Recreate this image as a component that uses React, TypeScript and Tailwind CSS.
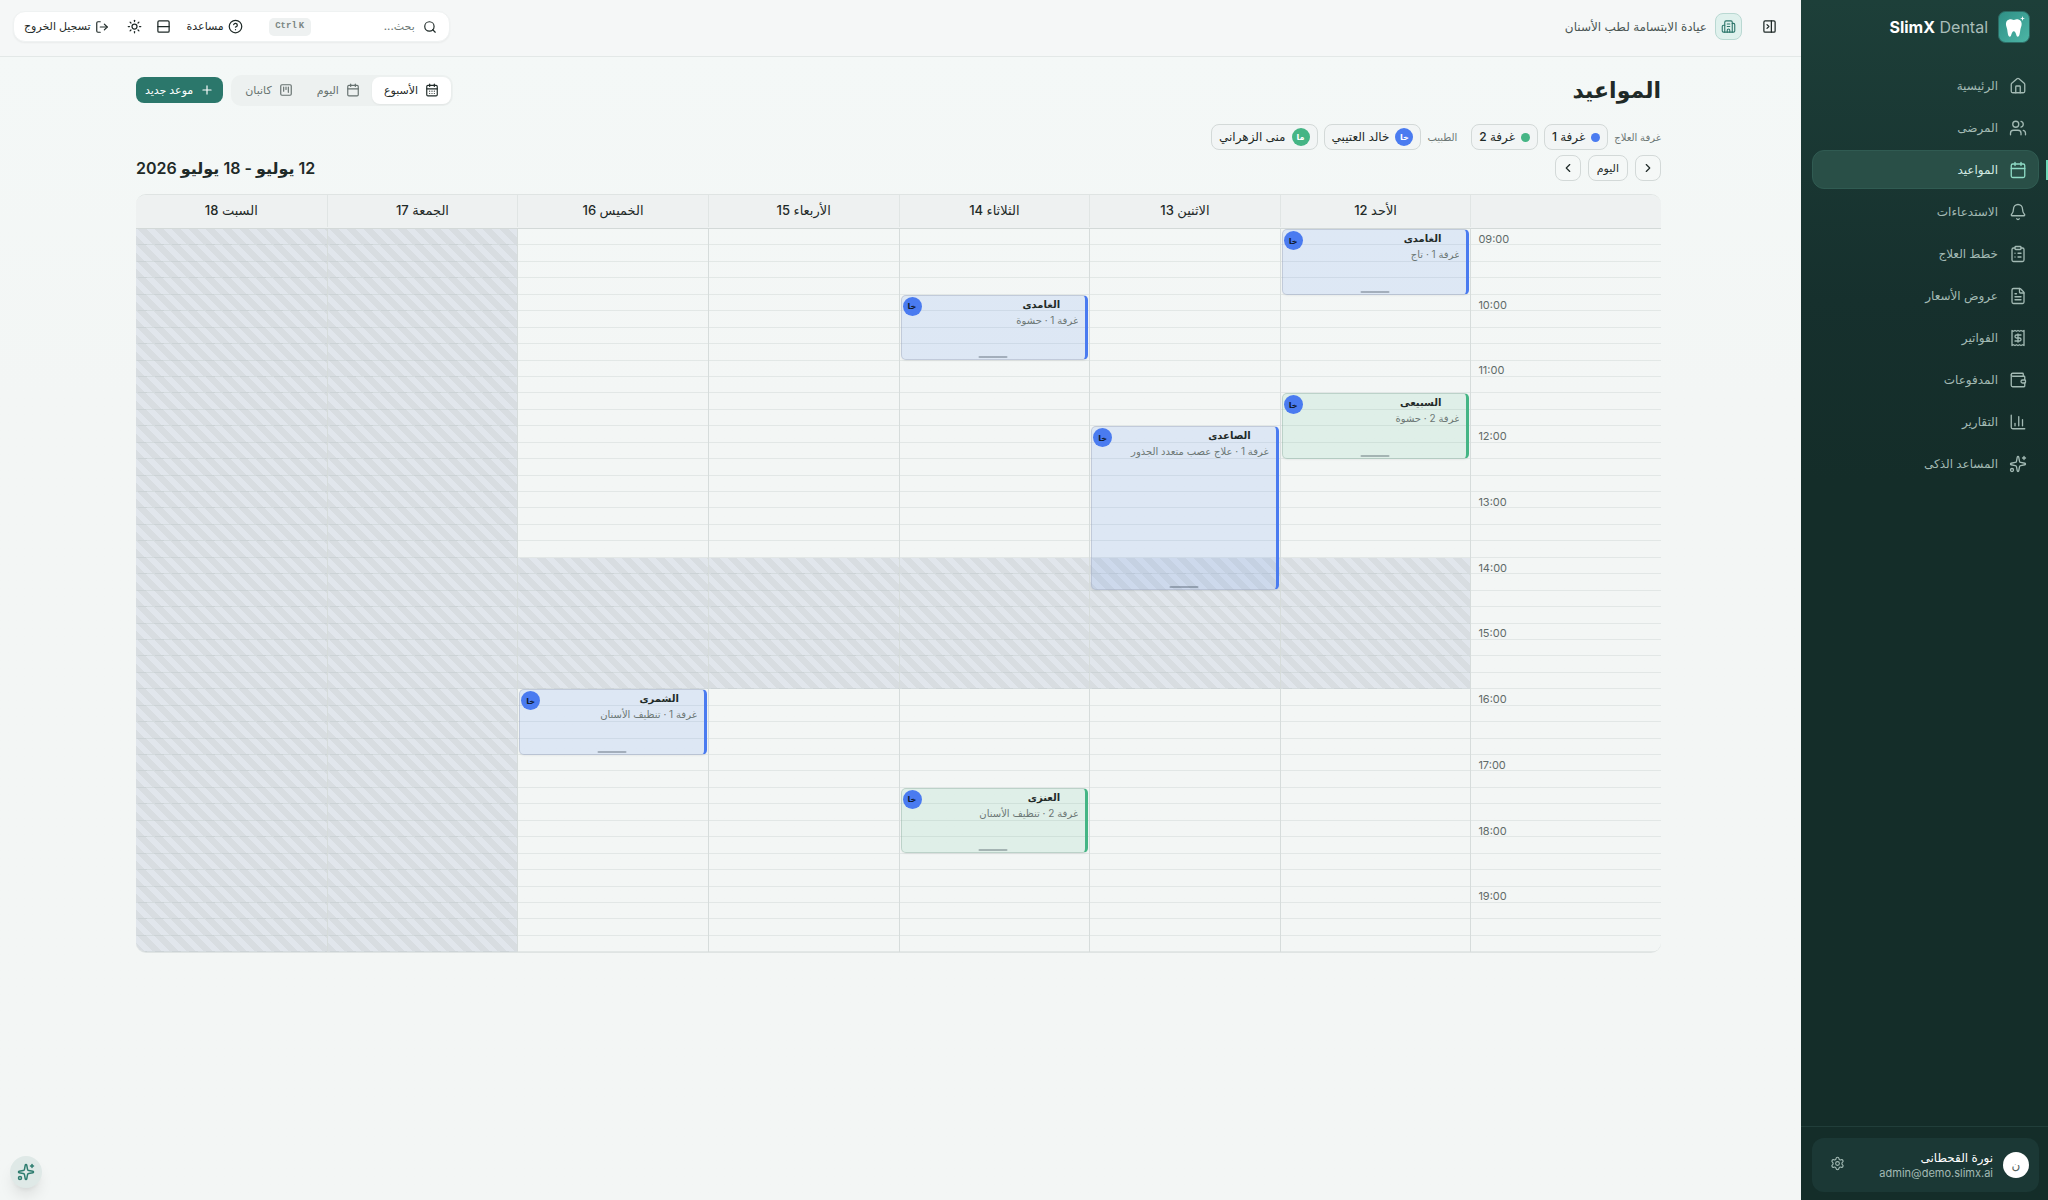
import type { ReactNode } from 'react'
import {
  Bell,
  Building2,
  Calendar,
  CalendarDays,
  ChartColumn,
  ChevronLeft,
  ChevronRight,
  CircleQuestionMark,
  ClipboardList,
  FileText,
  House,
  LogOut,
  PanelRightClose,
  Plus,
  Receipt,
  Rows2,
  Search,
  Settings,
  Sparkles,
  SquareKanban,
  Sun,
  Users,
  Wallet,
  type LucideIcon,
} from 'lucide-react'

type Tone = 'blue' | 'green'

interface NavItem {
  label: string
  icon: LucideIcon
  active?: boolean
}

interface Appointment {
  patient: string
  detail: string
  start: number
  end: number
  tone: Tone
}

interface Day {
  label: string
  closed: [number, number]
  appointments: Appointment[]
}

const OPEN_HOUR = 9
const CLOSE_HOUR = 20
const HOURS = Array.from({ length: CLOSE_HOUR - OPEN_HOUR }, (_, i) => OPEN_HOUR + i)
const SLOTS = HOURS.flatMap((h) => [h, h + 0.25, h + 0.5, h + 0.75])

const NAV: NavItem[] = [
  { label: 'الرئيسية', icon: House },
  { label: 'المرضى', icon: Users },
  { label: 'المواعيد', icon: Calendar, active: true },
  { label: 'الاستدعاءات', icon: Bell },
  { label: 'خطط العلاج', icon: ClipboardList },
  { label: 'عروض الأسعار', icon: FileText },
  { label: 'الفواتير', icon: Receipt },
  { label: 'المدفوعات', icon: Wallet },
  { label: 'التقارير', icon: ChartColumn },
  { label: 'المساعد الذكى', icon: Sparkles },
]

const DAYS: Day[] = [
  {
    label: 'الأحد 12',
    closed: [14, 16],
    appointments: [
      { patient: 'الغامدى', detail: 'غرفة 1 · تاج', start: 9, end: 10, tone: 'blue' },
      { patient: 'السبيعى', detail: 'غرفة 2 · حشوة', start: 11.5, end: 12.5, tone: 'green' },
    ],
  },
  {
    label: 'الاثنين 13',
    closed: [14, 16],
    appointments: [
      { patient: 'الصاعدى', detail: 'غرفة 1 · علاج عصب متعدد الجذور', start: 12, end: 14.5, tone: 'blue' },
    ],
  },
  {
    label: 'الثلاثاء 14',
    closed: [14, 16],
    appointments: [
      { patient: 'الغامدى', detail: 'غرفة 1 · حشوة', start: 10, end: 11, tone: 'blue' },
      { patient: 'العنزى', detail: 'غرفة 2 · تنظيف الأسنان', start: 17.5, end: 18.5, tone: 'green' },
    ],
  },
  { label: 'الأربعاء 15', closed: [14, 16], appointments: [] },
  {
    label: 'الخميس 16',
    closed: [14, 16],
    appointments: [
      { patient: 'الشمرى', detail: 'غرفة 1 · تنظيف الأسنان', start: 16, end: 17, tone: 'blue' },
    ],
  },
  { label: 'الجمعة 17', closed: [9, 20], appointments: [] },
  { label: 'السبت 18', closed: [9, 20], appointments: [] },
]

function span(start: number, end: number) {
  const total = CLOSE_HOUR - OPEN_HOUR
  return {
    top: `${((start - OPEN_HOUR) / total) * 100}%`,
    height: `${((end - start) / total) * 100}%`,
  }
}

function Logo() {
  return (
    <svg viewBox="0 0 32 32" className="size-8 shrink-0" aria-hidden="true">
      <defs>
        <linearGradient id="logo" x1="0" y1="0" x2="1" y2="1">
          <stop offset="0" stopColor="#2f8f86" />
          <stop offset="1" stopColor="#4db6a6" />
        </linearGradient>
      </defs>
      <rect x="0.5" y="0.5" width="31" height="31" rx="7" fill="url(#logo)" stroke="#2c6b64" />
      <path
        fill="#fff"
        d="M11.2 8.4c1.8-.4 3 .6 4.6.6s2.8-1 4.6-.6c2.6.6 3.6 3 3.2 5.7-.3 1.900-1 3-1.300 5-.3 2.300-.7 6.600-2.500 6.700-1.900.1-1.500-5.600-4-5.600s-2.100 5.700-4 5.600c-1.800-.1-2.200-4.400-2.500-6.700-.3-2-1-3.100-1.300-5-.4-2.700.6-5.100 3.200-5.700Z"
      />
      <path fill="#fff" d="m24.500 5 .6 1.900 1.900.6-1.900.6-.6 1.900-.6-1.900-1.900-.6 1.900-.6Z" />
    </svg>
  )
}

function Sidebar() {
  return (
    <aside className="flex w-[247px] shrink-0 flex-col bg-[#142d29] bg-linear-to-b from-[#1d3f39] via-[#16302d] via-25% to-[#142d29] to-40%">
      <div className="flex h-[54px] items-center gap-2.5 ps-[18px]">
        <Logo />
        <span dir="ltr" className="text-base text-[#a9bdb8]">
          <b className="font-bold text-white">SlimX</b> Dental
        </span>
      </div>
      <nav className="flex flex-col gap-[3px] ps-[9px] pe-[11px] pt-3">
        {NAV.map(({ label, icon: Icon, active }) => (
          <a
            key={label}
            href="#"
            aria-current={active ? 'page' : undefined}
            className={
              active
                ? 'relative flex h-[39px] items-center gap-[11px] rounded-xl border border-[#305b52] bg-[#294f47] px-[11px] text-xs font-medium text-[#d3ebe4]'
                : 'flex h-[39px] items-center gap-[11px] rounded-xl px-3 text-xs font-medium text-[#a3bab4]'
            }
          >
            <Icon className={active ? 'size-[18px] text-[#8fdcc6]' : 'size-[18px]'} strokeWidth={1.75} />
            {label}
            {active && <span className="absolute -right-[10px] h-5 w-0.5 bg-[#6fd8b8]" />}
          </a>
        ))}
      </nav>
      <div className="mt-auto border-t border-[#213e3a] ps-[9px] pe-[11px] pt-[11px] pb-2">
        <div className="flex h-[54px] items-center gap-2.5 rounded-xl bg-[#1b3835] px-2.5">
          <span className="flex size-[26px] items-center justify-center rounded-full bg-white text-xs text-[#54635f]">
            ن
          </span>
          <div className="flex flex-1 flex-col">
            <span className="text-xs leading-4 font-medium text-white">نورة القحطانى</span>
            <span dir="ltr" className="text-right text-[11px] leading-[14px] text-[#a3bab4]">
              admin@demo.slimx.ai
            </span>
          </div>
          <button type="button" aria-label="الإعدادات" className="px-2 pb-1 text-[#a3bab4]">
            <Settings className="size-[15px]" strokeWidth={1.75} />
          </button>
        </div>
      </div>
    </aside>
  )
}

function TopBar() {
  return (
    <header className="flex h-[57px] items-center justify-between border-b border-[#e3e8e7] bg-[#f5f7f7] ps-6 pe-[13px] pb-[3px]">
      <div className="flex items-center gap-2">
        <button type="button" aria-label="طي القائمة" className="me-3 text-[#1f2a28]">
          <PanelRightClose className="size-[15px]" />
        </button>
        <span className="flex size-[27px] items-center justify-center rounded-lg border border-[#b9d8d2] bg-[#dff1ed] text-[#2b756a]">
          <Building2 className="size-[15px]" strokeWidth={1.75} />
        </span>
        <span className="text-xs text-[#4a5654]">عيادة الابتسامة لطب الأسنان</span>
      </div>
      <div className="flex h-[31px] items-center rounded-xl border border-[#eff2f2] bg-white ps-3 pe-2.5 text-[11px] font-medium text-[#1f2a28] shadow-xs">
        <label className="flex items-center gap-2">
          <Search className="size-[14px]" />
          <input
            type="text"
            aria-label="بحث"
            placeholder="بحث..."
            className="w-[104px] bg-transparent outline-none placeholder:text-[#6c7775]"
          />
        </label>
        <kbd
          dir="ltr"
          className="flex h-[18px] w-[42px] items-center justify-center gap-0.5 rounded-[5px] bg-[#eef1f1] font-['Liberation_Mono',monospace] text-[9px] font-bold text-[#7b8583]"
        >
          <span>Ctrl</span>
          <span>K</span>
        </kbd>
        <button type="button" className="ms-[26px] flex items-center gap-1">
          <CircleQuestionMark className="size-[15px]" />
          مساعدة
        </button>
        <button type="button" aria-label="الكثافة" className="ms-4">
          <Rows2 className="size-[15px]" />
        </button>
        <button type="button" aria-label="المظهر" className="ms-[14px]">
          <Sun className="size-[15px]" />
        </button>
        <button type="button" className="ms-[18px] flex items-center gap-1">
          <LogOut className="size-[14px]" />
          تسجيل الخروج
        </button>
      </div>
    </header>
  )
}

function ViewTab({ icon: Icon, active, children }: { icon: LucideIcon; active?: boolean; children: ReactNode }) {
  return (
    <button
      type="button"
      aria-pressed={!!active}
      className={
        active
          ? 'flex h-[27px] items-center gap-[7px] rounded-lg bg-white px-3 text-[#1f2a28] shadow-xs'
          : 'flex h-[27px] items-center gap-[7px] rounded-lg px-3 text-[#66716f]'
      }
    >
      <Icon className="size-[14px]" />
      {children}
    </button>
  )
}

function Chip({ marker, children }: { marker: ReactNode; children: ReactNode }) {
  return (
    <button
      type="button"
      className="flex h-[26px] items-center gap-1.5 rounded-lg border border-[#d3d9d8] bg-[#f2f5f5] px-[7px] text-xs font-medium text-[#1f2a28]"
    >
      {marker}
      {children}
    </button>
  )
}

function Dot({ tone }: { tone: Tone }) {
  return <span className={tone === 'blue' ? 'size-[9px] rounded-full bg-[#4a7bf0]' : 'size-[9px] rounded-full bg-[#45b585]'} />
}

function Initials({ tone, children }: { tone: Tone; children: ReactNode }) {
  return (
    <span
      className={
        tone === 'blue'
          ? 'flex size-[18px] items-center justify-center rounded-full bg-[#4a7bf0] text-[8px] font-semibold text-white'
          : 'flex size-[18px] items-center justify-center rounded-full bg-[#45b585] text-[8px] font-semibold text-white'
      }
    >
      {children}
    </span>
  )
}

function AppointmentCard({ patient, detail, start, end, tone }: Appointment) {
  return (
    <div className="absolute inset-x-0 ps-px pe-px" style={span(start, end)}>
      <div
        className={
          tone === 'blue'
            ? 'relative h-full rounded-[5px] border border-s-3 border-[#a3aec0]/50 border-s-[#4a7bf0] bg-[#3f7bf0]/12 px-[7px] shadow-xs'
            : 'relative h-full rounded-[5px] border border-s-3 border-[#9ab5a9]/50 border-s-[#45b585] bg-[#2fb37a]/10 px-[7px] shadow-xs'
        }
      >
        <p className="truncate ps-[18px] pe-6 text-[10px] leading-4 font-semibold text-[#1f2a28]">{patient}</p>
        <p className="truncate text-[10px] leading-4 text-[#6c7775]">{detail}</p>
        <span className="absolute top-px left-px flex size-[19px] items-center justify-center rounded-full bg-[#4a7bf0] text-[8px] font-bold text-[#101a2c]">
          خا
        </span>
        <span className="absolute bottom-px left-1/2 h-0.5 w-[29px] -translate-x-1/2 rounded-full bg-[#1f2a38]/30" />
      </div>
    </div>
  )
}

function Slots({ closed }: { closed?: [number, number] }) {
  return (
    <div className="flex h-full flex-col">
      {SLOTS.map((t) => (
        <div
          key={t}
          className={
            closed && t >= closed[0] && t < closed[1]
              ? 'flex-1 border-b border-[#9fb0ac]/20 bg-[repeating-linear-gradient(45deg,#d8dde1_0px,#d8dde1_6px,#e1e6ec_6px,#e1e6ec_12px)]'
              : 'flex-1 border-b border-[#9fb0ac]/20'
          }
        />
      ))}
    </div>
  )
}

function WeekGrid() {
  return (
    <section className="mt-[13px] overflow-hidden rounded-[10px] border-y border-[#dfe4e3]">
      <div className="grid h-[34px] grid-cols-8 border-b border-[#d3d9d8] bg-[#eef1f1] pb-px text-[13px] font-medium text-[#1f2a28]">
        <div className="border-e border-[#e0e5e4]" />
        {DAYS.map((day) => (
          <div key={day.label} className="flex items-center justify-center border-e border-[#e0e5e4] last:border-e-0">
            {day.label}
          </div>
        ))}
      </div>
      <div className="grid h-[723px] grid-cols-8">
        <div className="relative border-e border-[#d6dcdb]">
          <Slots />
          <div className="absolute inset-0 grid grid-rows-11">
            {HOURS.map((h) => (
              <time key={h} dir="ltr" className="ps-[7px] pt-0.5 text-left text-[11px] leading-4 text-[#5f6b69]">
                {String(h).padStart(2, '0')}:00
              </time>
            ))}
          </div>
        </div>
        {DAYS.map((day) => (
          <div key={day.label} className="relative border-e border-[#d6dcdb] last:border-e-0">
            <Slots closed={day.closed} />
            {day.appointments.map((a) => (
              <AppointmentCard key={a.start} {...a} />
            ))}
          </div>
        ))}
      </div>
    </section>
  )
}

const ROUND_BUTTON =
  'flex h-[26px] items-center justify-center rounded-lg border border-[#d3d9d8] bg-[#f5f8f7] text-[11px] font-medium text-[#1f2a28]'

export default function App() {
  return (
    <div
      dir="rtl"
      lang="ar"
      className="flex min-h-screen bg-[#f4f6f5] font-['Inter','DejaVu_Sans',sans-serif] text-[#1f2a28]"
    >
      <Sidebar />
      <div className="flex min-w-0 flex-1 flex-col">
        <TopBar />
        <main className="flex-1 bg-linear-to-b from-[#f4f8f7] to-[#f3f6f5] to-30% ps-[140px] pe-[136px] pt-[17px]">
          <div className="flex items-center justify-between">
            <h1 className="text-[22px] leading-8 font-bold">المواعيد</h1>
            <div className="flex items-center gap-2">
              <div className="flex h-[31px] items-center rounded-[10px] bg-[#edf1f0] px-0.5 text-[11px] font-medium">
                <ViewTab icon={CalendarDays} active>
                  الأسبوع
                </ViewTab>
                <ViewTab icon={Calendar}>اليوم</ViewTab>
                <ViewTab icon={SquareKanban}>كانبان</ViewTab>
              </div>
              <button
                type="button"
                className="flex h-[26px] items-center gap-[7px] rounded-lg bg-[#2b776b] px-[9px] text-[11px] font-medium text-white"
              >
                <Plus className="size-[14px]" />
                موعد جديد
              </button>
            </div>
          </div>
          <div className="mt-[18px] flex items-center gap-1.5">
            <span className="text-[10px] text-[#6c7775]">غرفة العلاج</span>
            <Chip marker={<Dot tone="blue" />}>غرفة 1</Chip>
            <Chip marker={<Dot tone="green" />}>غرفة 2</Chip>
            <span className="ms-2 text-[10px] text-[#6c7775]">الطبيب</span>
            <Chip marker={<Initials tone="blue">خا</Initials>}>خالد العتيبي</Chip>
            <Chip marker={<Initials tone="green">ما</Initials>}>منى الزهراني</Chip>
          </div>
          <div className="mt-[5px] flex items-center justify-between">
            <div className="flex items-center gap-[7px]">
              <button type="button" aria-label="الأسبوع السابق" className={`${ROUND_BUTTON} w-[26px]`}>
                <ChevronRight className="size-[14px]" />
              </button>
              <button type="button" className={`${ROUND_BUTTON} px-2`}>
                اليوم
              </button>
              <button type="button" aria-label="الأسبوع التالي" className={`${ROUND_BUTTON} w-[26px]`}>
                <ChevronLeft className="size-[14px]" />
              </button>
            </div>
            <h2 className="text-base leading-6 font-semibold">12 يوليو - 18 يوليو 2026</h2>
          </div>
          <WeekGrid />
        </main>
      </div>
      <button
        type="button"
        aria-label="المساعد الذكي"
        className="fixed bottom-3 left-2.5 flex size-8 items-center justify-center rounded-full bg-[#dfe9e7] text-[#2f7d70] shadow-lg"
      >
        <Sparkles className="size-[18px]" />
      </button>
    </div>
  )
}
